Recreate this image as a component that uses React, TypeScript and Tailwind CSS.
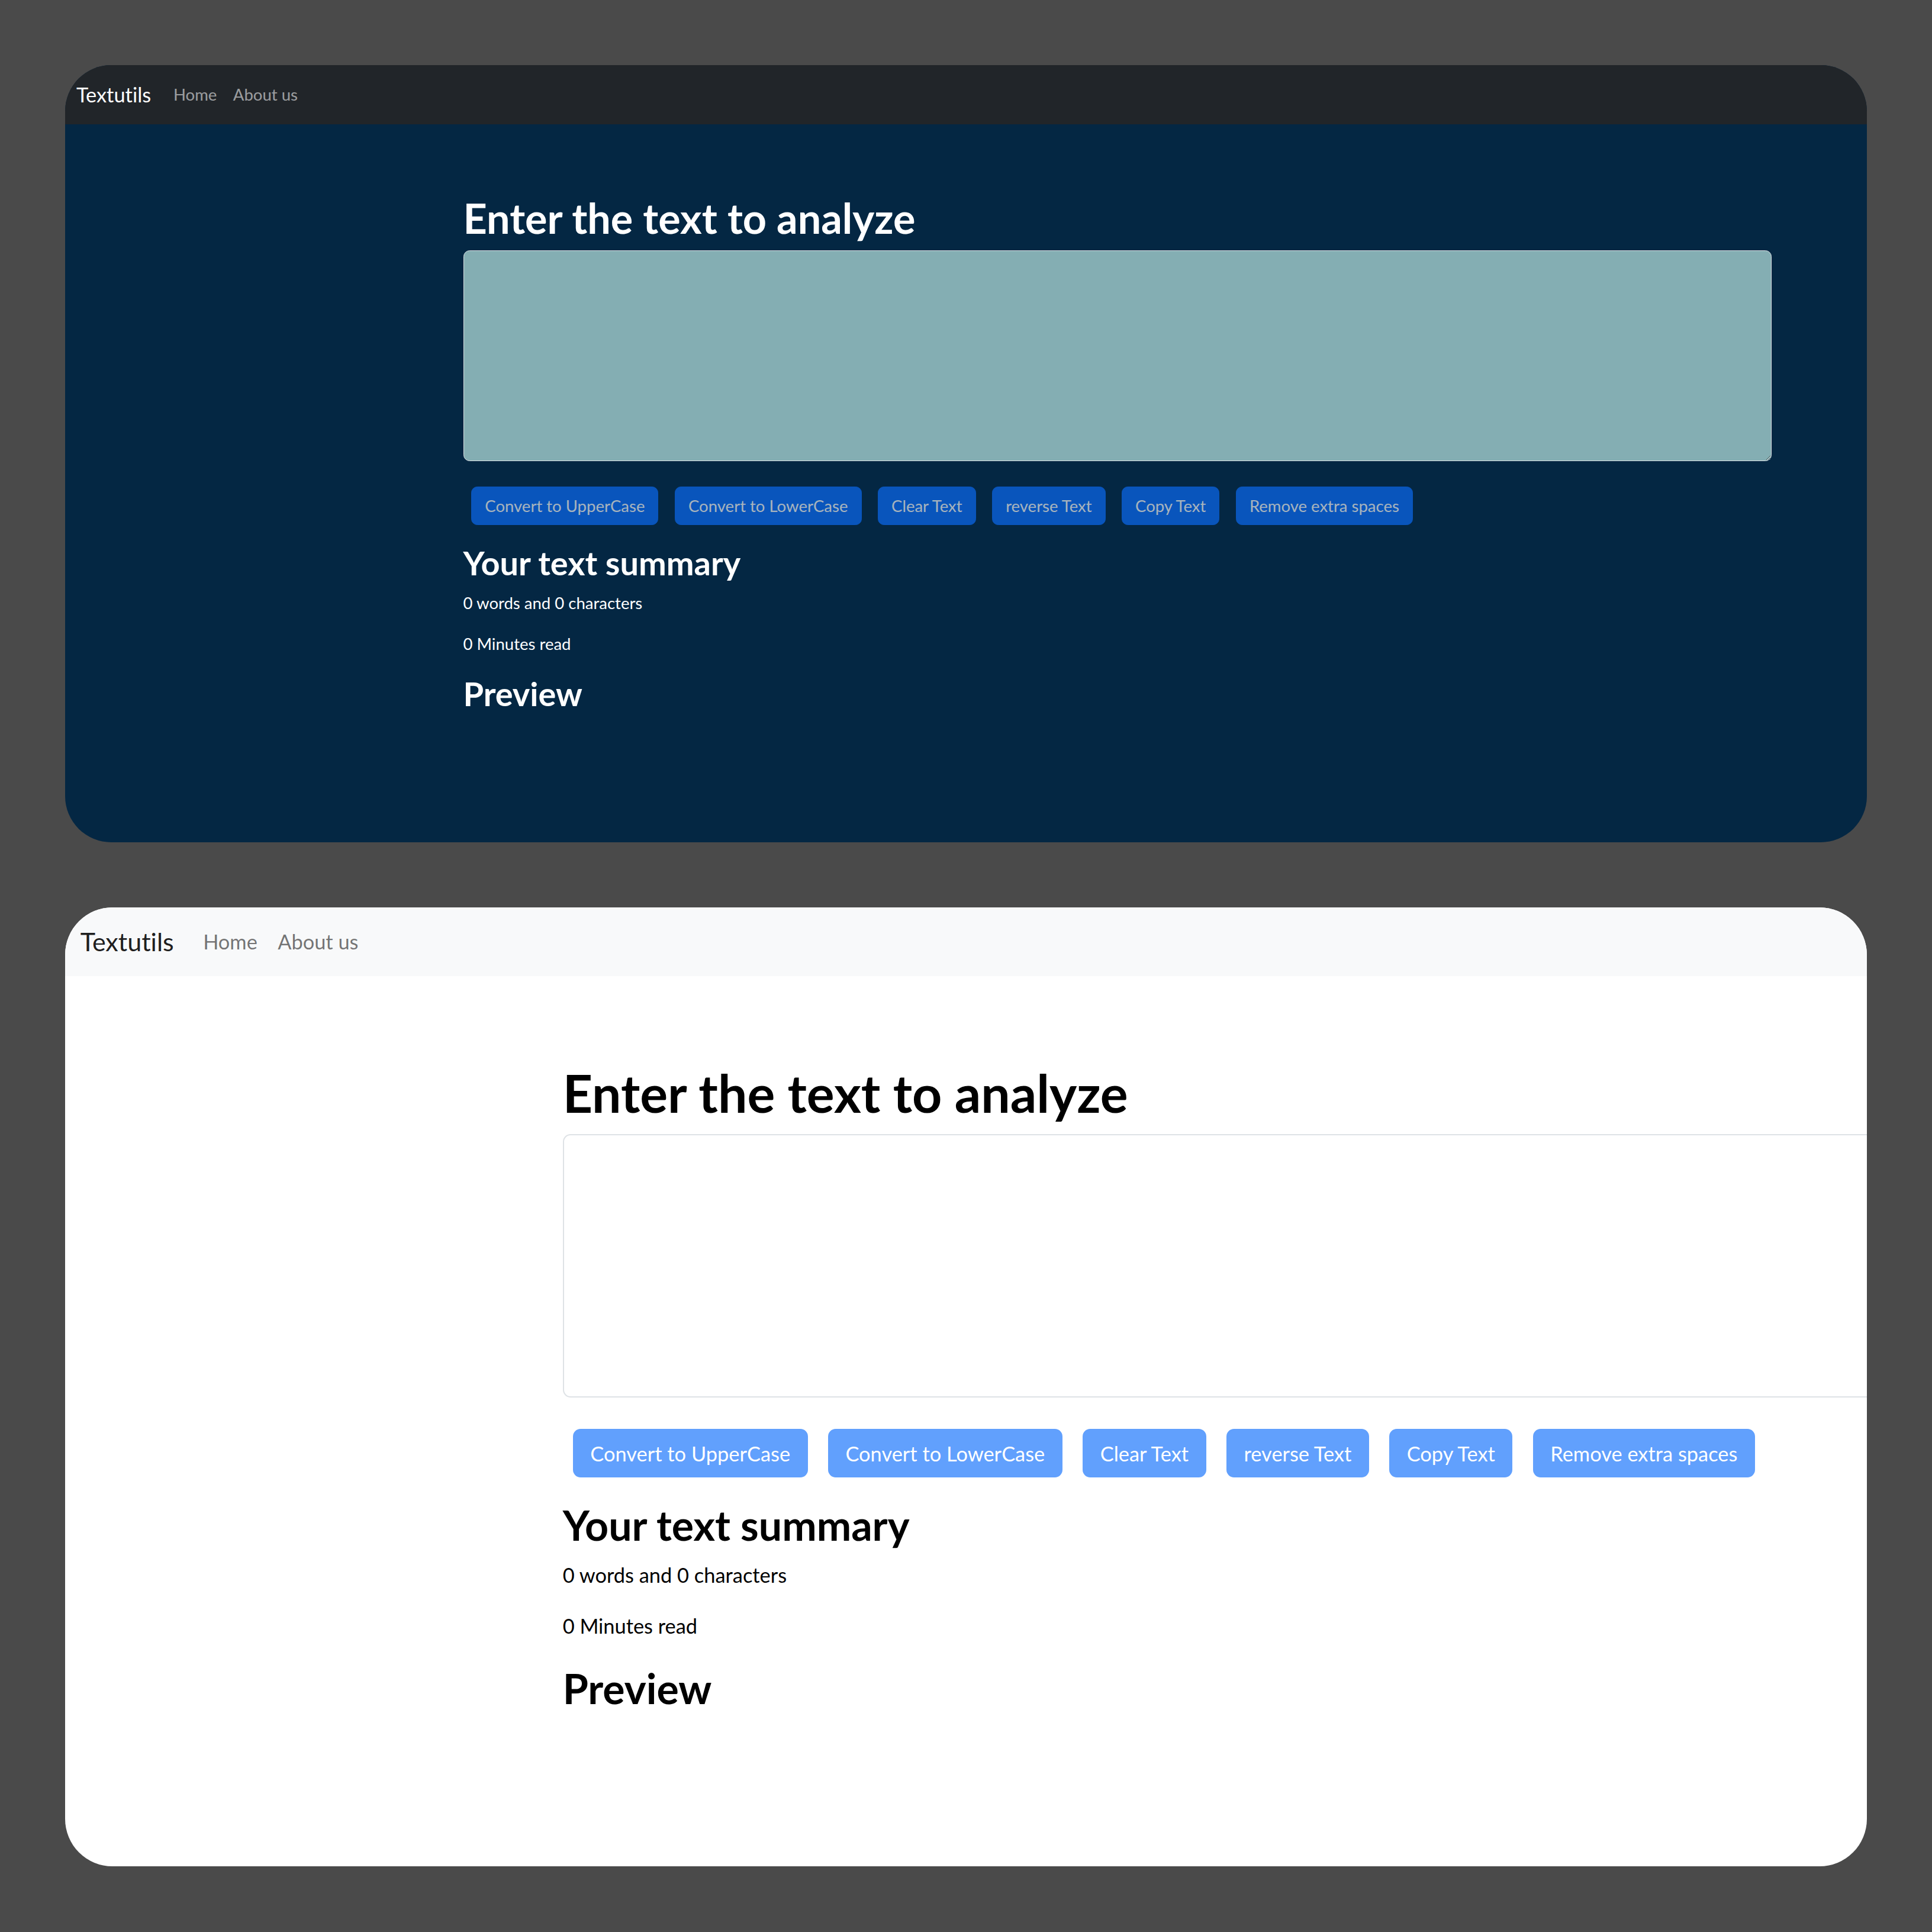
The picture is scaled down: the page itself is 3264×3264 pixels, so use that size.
import React from 'react';

const ACTIONS = [
  'Convert to UpperCase',
  'Convert to LowerCase',
  'Clear Text',
  'reverse Text',
  'Copy Text',
  'Remove extra spaces',
];

function Navbar({ dark }: { dark: boolean }) {
  return (
    <nav
      className={
        dark
          ? 'flex h-[58px] items-center bg-[#212529] pl-[11px]'
          : 'flex h-[54px] items-center bg-[#f8f9fa] pl-[12px]'
      }
    >
      <a className={dark ? 'mr-[14px] text-[20px] text-white' : 'mr-[15px] text-[20px] text-black/90'}>
        Textutils
      </a>
      <a className={dark ? 'px-[8px] text-[16px] text-white/55' : 'px-[8px] text-[16px] text-black/55'}>
        Home
      </a>
      <a className={dark ? 'px-[8px] text-[16px] text-white/55' : 'px-[8px] text-[16px] text-black/55'}>
        About us
      </a>
    </nav>
  );
}

function TextForm({ dark }: { dark: boolean }) {
  const fg = dark ? 'text-white' : 'text-black';
  return (
    <div className={`ml-[391px] w-[1285px] pt-[68px] ${fg}`}>
      <h1 className="mb-[8px] text-[40.8px] leading-[48px] font-bold">Enter the text to analyze</h1>
      <textarea
        rows={8}
        className={
          dark
            ? 'block h-[207px] w-full rounded-[6px] border border-[#dee2e6] bg-[#84aeb3] px-[12px] py-[6px] text-[16px]'
            : 'block h-[207px] w-full rounded-[6px] border border-[#dee2e6] bg-white px-[12px] py-[6px] text-[16px]'
        }
      />
      <div className="mt-[25px] flex gap-[16px] pl-[8px]">
        {ACTIONS.map((a) => (
          <button
            key={a}
            disabled
            className="h-[38px] rounded-[6px] border border-[#0d6efd] bg-[#0d6efd] px-[12.8px] text-[16px] text-white opacity-65"
          >
            {a}
          </button>
        ))}
      </div>

      <h2 className="mt-[18px] mb-[8px] text-[32.5px] leading-[38.4px] font-bold">Your text summary</h2>
      <p className="mb-[16px] text-[16px] leading-[24px]">0 words and 0 characters</p>
      <p className="mb-[18px] text-[16px] leading-[24px]">0 Minutes read</p>
      <h2 className="mb-[8px] text-[32.5px] leading-[38.4px] font-bold">Preview</h2>
    </div>
  );
}

export default function App() {
  return (
    <div className="flex min-h-[3264px] w-[3264px] flex-col gap-[110px] bg-[#4a4a4a] p-[110px] font-['Lato',sans-serif] [font-variant-ligatures:no-common-ligatures]">
      {/* dark mode, rendered at 1.72x */}
      <section className="h-[1313px] overflow-hidden rounded-[78px] bg-[#042743]">
        <div className="[zoom:1.72]">
          <Navbar dark />
          <TextForm dark />
        </div>
      </section>

      {/* light mode, zoomed in further and cut off at the right */}
      <section className="h-[1620px] overflow-hidden rounded-[80px] bg-white">
        <div className="[zoom:2.15]">
          <Navbar dark={false} />
          <TextForm dark={false} />
        </div>
      </section>
    </div>
  );
}
